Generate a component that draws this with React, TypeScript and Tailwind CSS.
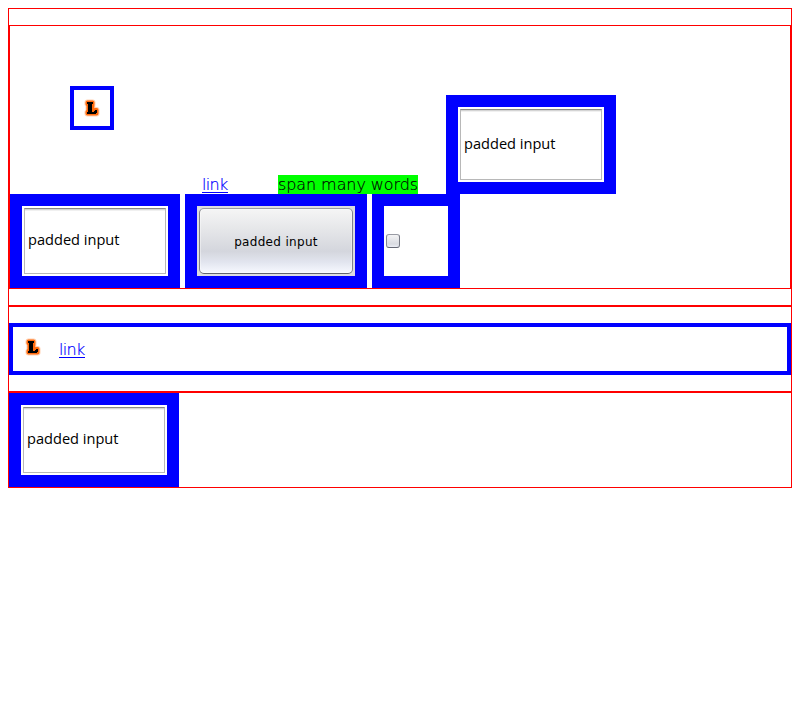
import React from "react";

const thin = "font-['DejaVu_Sans',sans-serif] font-extralight text-[16px] leading-[19px] whitespace-nowrap";

function Logo() {
  return (
    <svg width="16" height="16" viewBox="0 0 16 16" className="block shrink-0 overflow-visible">
      <path d="M3.5 2.5H8.5V4L8 11.5H10L11 10H12.5V13.5H3.5V12L4.5 11V5L3.5 4Z" fill="none" stroke="#ff9a55" strokeWidth="6" strokeLinejoin="round" opacity=".45" />
      <path d="M3.5 2.5H8.5V4L8 11.5H10L11 10H12.5V13.5H3.5V12L4.5 11V5L3.5 4Z" fill="#ff6a0d" stroke="#ff6a0d" strokeWidth="4" strokeLinejoin="round" />
      <path d="M3 2H9V4H8V12H10V11H11V10H13V13H12V14H3V12H4V4H3Z" fill="#000" />
    </svg>
  );
}

function Link() {
  return (
    <a className={`${thin} block h-[18px] w-[26px] border-b border-[#0000ff] tracking-[-0.7px] text-[#0000ff] [-webkit-text-stroke:0.2px_#0000ff]`}>link</a>
  );
}

function Field({ tall = false }: { tall?: boolean }) {
  return (
    <div className={`w-[170px] shrink-0 border-[12px] border-[#0000ff] bg-white p-[2px] ${tall ? "h-[99px]" : "h-[94px]"}`}>
      <div className={`flex h-full items-center border border-t-[#888888] border-[#b8b8b8] bg-white pl-[3px] shadow-[inset_0_1px_0_#d4d4d4,inset_0_2px_0_#f0f0f0] ${tall ? "pb-[2px]" : "pb-[4px]"}`}>
        <span className="font-['Open_Sans',sans-serif] text-[14.6px] leading-[19px] whitespace-nowrap text-black">padded input</span>
      </div>
    </div>
  );
}

export default function App() {
  return (
    <div className="h-[725px] w-[800px] bg-white p-2 text-black">
      <section className="h-[298px] border border-[#ff0000] pt-4">
        <div className="h-[264px] border border-[#ff0000]">
          <div className="flex h-[168px] items-start">
            <div className="mt-[60px] ml-[60px] size-[44px] border-4 border-[#0000ff] p-[10px]">
              <Logo />
            </div>
            <div className="mt-[149px] ml-[88px]">
              <Link />
            </div>
            <span className={`${thin} mt-[149px] ml-[50px] h-[19px] w-[140px] bg-[#00ff00] tracking-[-0.08px] [-webkit-text-stroke:0.15px_#000]`}>span many words</span>
            <div className="mt-[69px] ml-[28px]">
              <Field tall />
            </div>
          </div>
          <div className="flex h-[94px] gap-[5px]">
            <Field />
            <div className="h-[94px] w-[182px] border-[12px] border-[#0000ff] bg-[#dddddf] p-[2px]">
              <button className="flex h-full w-full items-center justify-center rounded-[5px] border border-t-[#9b9ea6] border-r-[#80838b] border-b-[#62656f] border-l-[#80838b] bg-[linear-gradient(#f5f5f5_0%,#e4e5e8_35%,#d4d6dd_66%,#e2e5ef_83%,#f7f9ff_100%)] pt-[2px] font-['DejaVu_Sans',sans-serif] text-[12px] tracking-[0.32px] whitespace-nowrap shadow-[inset_0_0_0_1px_#ffffff66]">
                padded input
              </button>
            </div>
            <div className="flex h-[94px] w-[88px] items-center border-[12px] border-[#0000ff] pl-[2px]">
              <div className="size-[14px] rounded-[3px] border border-t-[#999ba4] border-r-[#777a85] border-b-[#666975] border-l-[#858894] bg-[linear-gradient(#f4f4f5,#d9dbe1_75%,#eceef5)]" />
            </div>
          </div>
        </div>
      </section>
      <section className="h-[86px] border border-[#ff0000] pt-4">
        <div className="flex h-[52px] items-start border-4 border-[#0000ff] pt-[12px] pl-[12px]">
          <Logo />
          <div className="mt-[1px] ml-[18px]">
            <Link />
          </div>
        </div>
      </section>
      <section className="h-[96px] border border-[#ff0000]">
        <Field />
      </section>
    </div>
  );
}
